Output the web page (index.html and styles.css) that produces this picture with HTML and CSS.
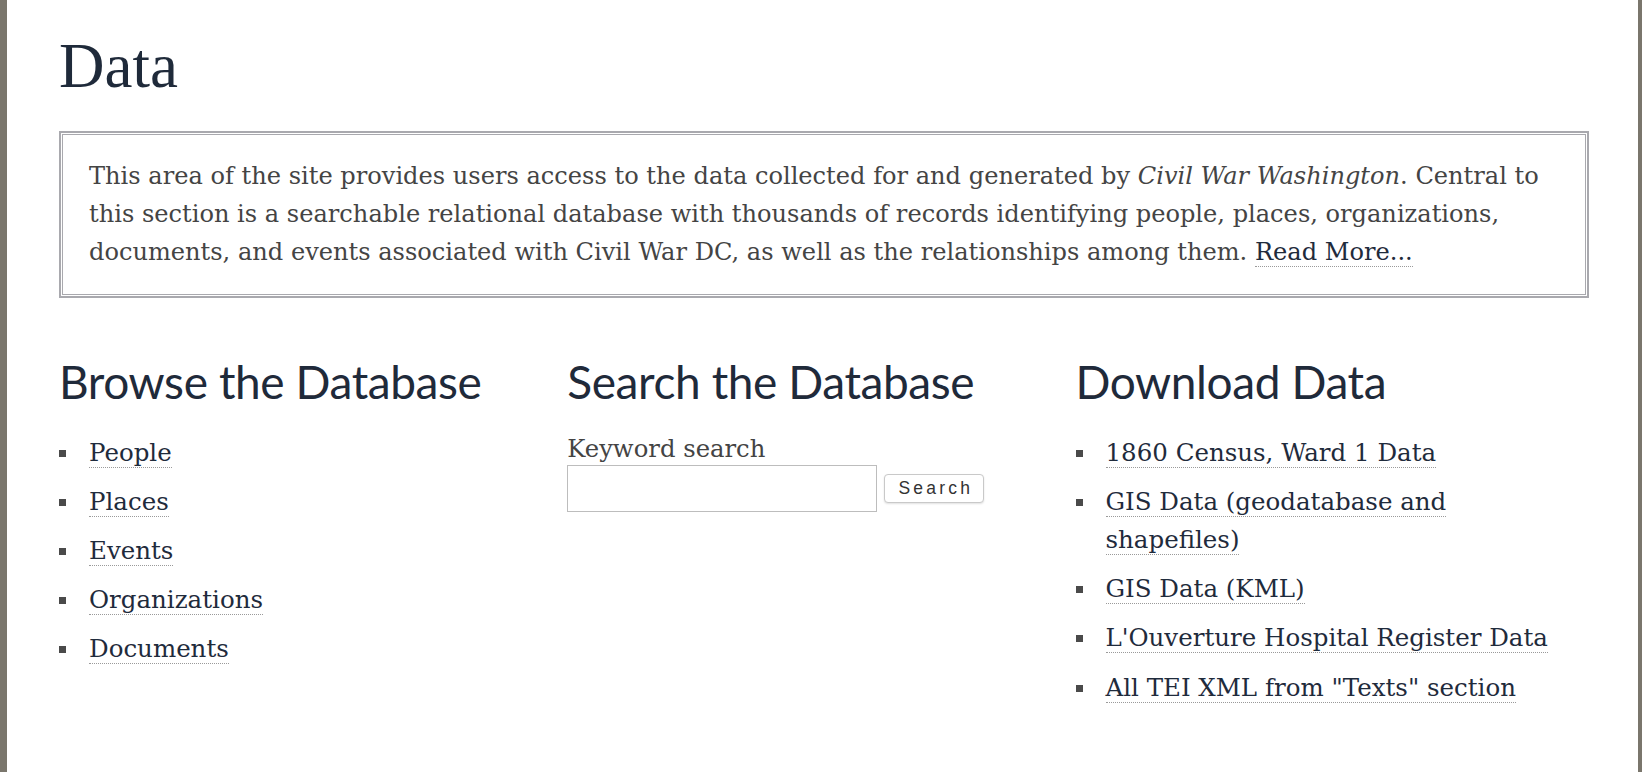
FILE: index.html
```html
<!DOCTYPE html>
<html lang="en">
<head>
<meta charset="utf-8">
<title>Data</title>
<link rel="stylesheet" href="styles.css">
</head>
<body>
<div class="page">
  <h1 class="title">Data</h1>
  <div class="intro">
    <p>This area of the site provides users access to the data collected for and generated by <em>Civil War Washington</em>. Central to this section is a searchable relational database with thousands of records identifying people, places, organizations, documents, and events associated with Civil War DC, as well as the relationships among them. <a href="#">Read More...</a></p>
  </div>
  <div class="columns">
    <section class="col">
      <h2>Browse the Database</h2>
      <ul class="links">
        <li><a href="#">People</a></li>
        <li><a href="#">Places</a></li>
        <li><a href="#">Events</a></li>
        <li><a href="#">Organizations</a></li>
        <li><a href="#">Documents</a></li>
      </ul>
    </section>
    <section class="col">
      <h2>Search the Database</h2>
      <form class="search">
        <label for="q">Keyword search</label>
        <div class="search-row">
          <input id="q" type="text">
          <button type="button">Search</button>
        </div>
      </form>
    </section>
    <section class="col">
      <h2>Download Data</h2>
      <ul class="links">
        <li><a href="#">1860 Census, Ward 1 Data</a></li>
        <li><a href="#">GIS Data (geodatabase and shapefiles)</a></li>
        <li><a href="#">GIS Data (KML)</a></li>
        <li><a href="#">L'Ouverture Hospital Register Data</a></li>
        <li><a href="#">All TEI XML from "Texts" section</a></li>
      </ul>
    </section>
  </div>
</div>
</body>
</html>
```

FILE: styles.css
```css
html, body {
  margin: 0;
  height: 100%;
}

body {
  background: #7a766c;
  font-family: "DejaVu Serif", Georgia, serif;
  color: #444;
}

.page {
  margin-left: 7px;
  width: 1631px;
  min-height: 100%;
  background: #fff;
  padding: 28px 49px 0 52px;
  box-sizing: border-box;
}

.title {
  font-family: "Liberation Serif", "Times New Roman", serif;
  font-weight: normal;
  font-size: 63px;
  line-height: 76px;
  margin: 0 0 27px;
  color: #1f2a3a;
}

.intro {
  border: 2px solid #a9a9ae;
  box-shadow: inset 0 0 0 1px #fff, inset 0 0 0 2px #a9a9ae;
  padding: 25.25px 28px 24.65px;
}

.intro p {
  margin: 0;
  font-size: 24.1px;
  line-height: 37.7px;
  color: #444;
}

a {
  color: #1f2b3c;
  text-decoration: none;
  border-bottom: 1px dotted #9a9a9a;
}

.columns {
  display: grid;
  grid-template-columns: repeat(3, 508.25px);
  margin-top: 55.6px;
}

.col h2 {
  font-family: Lato, "Open Sans", sans-serif;
  font-weight: normal;
  font-size: 46px;
  line-height: 55.2px;
  letter-spacing: -0.4px;
  margin: 0 0 25px;
  color: #1f2a3a;
}

.links {
  list-style: none;
  margin: 0;
  padding: 0 24px 0 0;
}

.links li {
  padding-left: 30px;
  text-indent: -30px;
  font-size: 24.5px;
  line-height: 38.4px;
  margin-bottom: 10.7px;
}

.links li::before {
  content: "";
  display: inline-block;
  width: 7px;
  height: 7px;
  background: #4a4a4a;
  margin-right: 23px;
  vertical-align: 4px;
}

.search label {
  display: block;
  font-size: 24.3px;
  line-height: 30px;
  color: #444;
}

.search-row {
  display: flex;
  align-items: center;
  gap: 7px;
  margin-top: 1.5px;
}

.search-row input {
  width: 310px;
  height: 47px;
  box-sizing: border-box;
  border: 1px solid #bdbdbd;
  margin: 0;
  padding: 0 6px;
}

.search-row button {
  width: 100px;
  height: 29px;
  box-sizing: border-box;
  border: 1px solid #c9c9c9;
  border-radius: 4px;
  background: #fff;
  box-shadow: 0 1px 2px rgba(0, 0, 0, 0.12);
  font-family: "Liberation Sans", Arial, sans-serif;
  font-size: 17.5px;
  letter-spacing: 3.2px;
  color: #333;
  padding: 0 0 0 3px;
  margin: 0;
}
```
